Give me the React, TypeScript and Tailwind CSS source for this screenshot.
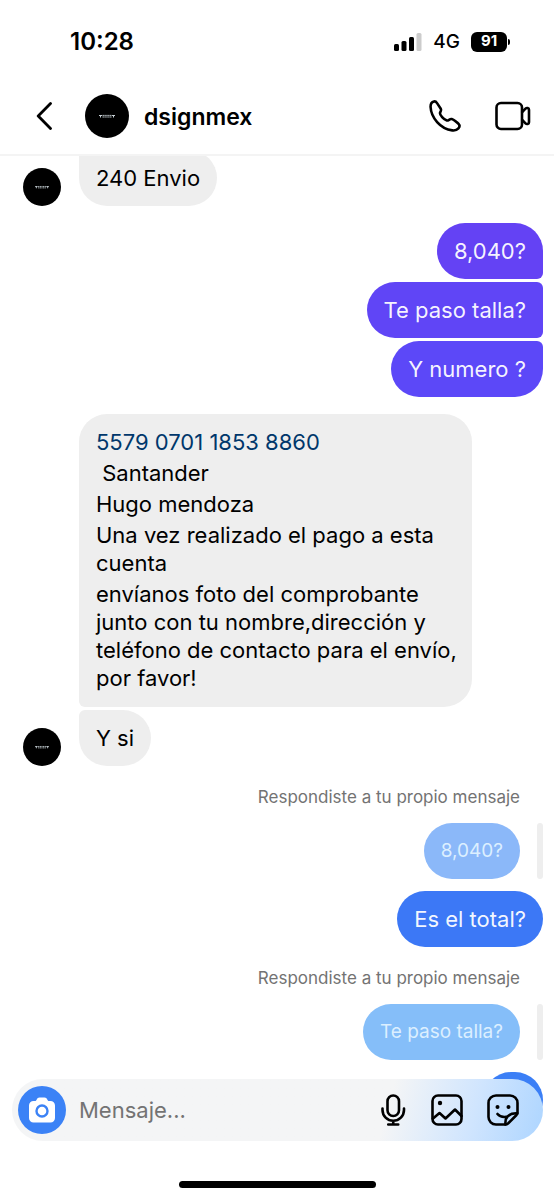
import type { ReactNode } from "react";

type Corner = "top" | "middle" | "bottom";

const sentCorners: Record<Corner, string> = {
  top: "rounded-br-md",
  middle: "rounded-r-md",
  bottom: "rounded-tr-md",
};

function Avatar({ size }: { size: "md" | "lg" }) {
  return (
    <svg viewBox="0 0 44 44" className={size === "lg" ? "size-11 shrink-0" : "size-[38px] shrink-0"} aria-hidden="true">
      <circle cx="22" cy="22" r="22" fill="#000" />
      <g fill="none" stroke="#c4cdd2" strokeWidth="1">
        <path d="M14 21.5h3M15.5 21v2.5M27 21.5h3M28.5 21v2.5" />
        <path d="M17.5 21.4h9M17.5 23h9" strokeDasharray="1.4 .5" />
      </g>
    </svg>
  );
}

function SentBubble({ children, corner, color }: { children: ReactNode; corner?: Corner; color: string }) {
  return (
    <p className={`rounded-[28px] px-[17px] py-[14px] text-[22px] leading-7 text-white/95 ${color} ${corner ? sentCorners[corner] : ""}`}>
      {children}
    </p>
  );
}

function ReplyQuote({ children, color }: { children: ReactNode; color: string }) {
  return (
    <div className="flex flex-col items-end">
      <p className="mr-[23px] text-[17px] leading-5 text-[#737373]">Respondiste a tu propio mensaje</p>
      <div className="mt-4 flex gap-[17px]">
        <p className={`rounded-[28px] px-[17px] py-[14px] text-[19px] leading-7 text-[#dcefff] ${color}`}>{children}</p>
        <span className="w-[6px] rounded-full bg-[#eee]" />
      </div>
    </div>
  );
}

function StatusBar() {
  return (
    <div className="flex h-[77px] items-center justify-between pt-[6px] pr-11 pl-[70px]">
      <time className="text-2xl font-semibold">10:28</time>
      <div className="flex items-center gap-[11px]">
        <svg width="28" height="18" viewBox="0 0 28 18" aria-hidden="true">
          <rect x="0" y="11" width="5" height="7" rx="1.5" />
          <rect x="7.5" y="8" width="5" height="10" rx="1.5" />
          <rect x="15" y="4" width="5" height="14" rx="1.5" />
          <rect x="22.5" y="0" width="5" height="18" rx="1.5" fill="#ccc" />
        </svg>
        <span className="pt-px text-[19px] font-medium">4G</span>
        <span className="flex items-center gap-px">
          <span className="flex h-5 w-9 items-center justify-center rounded-md bg-black text-[15px] font-bold text-white">91</span>
          <span className="h-[6px] w-[2px] rounded-r-full bg-black" />
        </span>
      </div>
    </div>
  );
}

function ChatHeader() {
  return (
    <header className="relative z-10 border-b-2 border-[#f4f4f4] bg-white">
      <StatusBar />
      <div className="flex h-[77px] items-center pr-[23px] pl-9">
        <button type="button" aria-label="Atrás">
          <svg width="18" height="28" viewBox="0 0 18 28" fill="none" stroke="#000" strokeWidth="2.8" strokeLinecap="round" strokeLinejoin="round">
            <path d="M14.5 1.600 2.200 14l12.300 12.400" />
          </svg>
        </button>
        <div className="ml-[31px] flex flex-1 items-center gap-[15px]">
          <Avatar size="lg" />
          <h1 className="pt-[3px] text-[23px] font-semibold">dsignmex</h1>
        </div>
        <div className="flex items-center gap-[34px]">
          <button type="button" aria-label="Llamar">
            <svg width="32" height="32" viewBox="0 0 31 31" fill="none" stroke="#000" strokeWidth="2.5" strokeLinecap="round" strokeLinejoin="round">
              <path d="M1.500 6.500C1.500 3.500 3 1.800 4.800 1.400C6 1.200 7 1.800 7.800 3L11.400 8.500C12.200 10 11.300 11 10.700 12.300C10.100 14.300 14.500 19 17.300 19.900C19 20.200 20 18 22 18.500C23.500 18.900 26.500 21.300 28.300 22.700C30 24.200 29.800 26 28.500 27.500C27 29.300 25 29.700 22.500 29.400C11 28 2 17 1.500 6.500Z" />
            </svg>
          </button>
          <button type="button" aria-label="Videollamada">
            <svg width="36" height="30" viewBox="0 0 36 30" fill="none" stroke="#000" strokeWidth="2.6" strokeLinecap="round" strokeLinejoin="round">
              <rect x="1.500" y="2" width="25.500" height="26" rx="4.500" />
              <path d="M27.200 11 30.500 7.700c1.200-1.200 3.500-.8 3.500 1v12.600c0 1.800-2.300 2.200-3.500 1L27.200 19" />
            </svg>
          </button>
        </div>
      </div>
    </header>
  );
}

function Composer() {
  return (
    <form className="flex h-[62px] items-center rounded-full bg-linear-105 from-[#f4f5f6] from-70% via-[#d0e5fe] via-86% to-[#add5ff] pr-6 pl-[6px]">
      <button type="button" aria-label="Cámara" className="flex size-12 shrink-0 items-center justify-center rounded-full bg-[#3b82f6]">
        <svg width="28" height="26" viewBox="0 0 28 26" aria-hidden="true">
          <path fill="#fff" d="M5.500 4H7c.8 0 1.200-.4 1.600-1.200C9.400 1.200 10 .5 11.500.5h5c1.500 0 2.100.7 2.900 2.300.4.800.8 1.200 1.600 1.200h1.500A4.500 4.500 0 0 1 27 8.500V21a4.500 4.500 0 0 1-4.500 4.500h-17A4.500 4.500 0 0 1 1 21V8.500A4.500 4.500 0 0 1 5.500 4Z" />
          <circle cx="14" cy="14" r="5.500" fill="#fff" stroke="#3b82f6" strokeWidth="2.400" />
        </svg>
      </button>
      <input
        type="text"
        aria-label="Mensaje"
        placeholder="Mensaje..."
        className="ml-[13px] min-w-0 flex-1 bg-transparent text-[22px] outline-none placeholder:text-[#737373]"
      />
      <div className="flex items-center gap-6">
        <button type="button" aria-label="Mensaje de voz">
          <svg width="26" height="32" viewBox="0 0 26 32" fill="none" stroke="#000" strokeWidth="2.600" strokeLinecap="round">
            <rect x="6.500" y="1.500" width="11.500" height="20.500" rx="5.750" />
            <path d="M1.500 14.500v1.500a10.750 10.750 0 0 0 21.500 0v-1.500M12.250 27v3.500M7.250 30.500h10" />
          </svg>
        </button>
        <button type="button" aria-label="Galería">
          <svg width="32" height="32" viewBox="0 0 32 32" fill="none" stroke="#000" strokeWidth="2.600" strokeLinecap="round" strokeLinejoin="round">
            <rect x="1.500" y="1.500" width="29" height="29" rx="5.500" />
            <path d="m2 24.500 6.500-5.500 6 5.500 9.500-9 6.500 6.500" />
            <circle cx="9" cy="9" r="2.200" fill="#000" stroke="none" />
          </svg>
        </button>
        <button type="button" aria-label="Stickers">
          <svg width="32" height="32" viewBox="0 0 32 32" fill="none" stroke="#000" strokeWidth="2.600" strokeLinecap="round" strokeLinejoin="round">
            <path d="M18.500 30.500H9A7.500 7.500 0 0 1 1.500 23V9A7.500 7.500 0 0 1 9 1.500h14A7.500 7.500 0 0 1 30.500 9v9.500c0 1-.4 1.800-1 2.500l-8.500 8.500c-.7.600-1.500 1-2.500 1Z" />
            <path d="M18.500 30.500c-.3-3 .2-6.200 2.200-8.200 2.200-2.200 5.600-3.300 9.600-3M10.500 20c1.800 2.300 4.800 3.400 9 2.800" />
            <circle cx="10.500" cy="13" r="2" fill="#000" stroke="none" />
            <circle cx="21.500" cy="13" r="2" fill="#000" stroke="none" />
          </svg>
        </button>
      </div>
    </form>
  );
}

export default function App() {
  return (
    <div className="flex min-h-screen flex-col overflow-hidden bg-white font-['Inter',sans-serif] text-black">
      <ChatHeader />

      <main className="-mt-[6px] flex flex-1 flex-col gap-[17px] pr-[11px] pl-[23px]">
        <div className="flex items-end gap-[18px]">
          <Avatar size="md" />
          <p className="rounded-[28px] rounded-tl-md bg-[#eee] px-[17px] py-[14px] text-[22px] leading-7">240 Envio</p>
        </div>

        <div className="flex flex-col items-end gap-[3px]">
          <SentBubble corner="top" color="bg-[#6442f4]">8,040?</SentBubble>
          <SentBubble corner="middle" color="bg-[#6045f6]">Te paso talla?</SentBubble>
          <SentBubble corner="bottom" color="bg-[#5c48f8]">Y numero ?</SentBubble>
        </div>

        <div className="flex flex-col gap-[3px]">
          <div className="ml-14 flex w-[393px] flex-col gap-[3px] rounded-[28px] rounded-bl-md bg-[#eee] px-[17px] pt-[14px] pb-[15px] text-[22px] leading-7">
            <p>
              <a href="#" className="text-[#00376b]">5579 0701 1853 8860</a>
            </p>
            <p className="whitespace-pre"> Santander</p>
            <p>Hugo mendoza</p>
            <p>
              Una vez realizado el pago a esta
              <br />
              cuenta
            </p>
            <p className="whitespace-nowrap">
              envíanos foto del comprobante
              <br />
              junto con tu nombre,dirección y
              <br />
              teléfono de contacto para el envío,
              <br />
              por favor!
            </p>
          </div>
          <div className="flex items-end gap-[18px]">
            <Avatar size="md" />
            <p className="rounded-[28px] rounded-tl-md bg-[#eee] px-[17px] py-[14px] text-[22px] leading-7">Y si</p>
          </div>
        </div>

        <div className="mt-1 flex flex-col items-end">
          <ReplyQuote color="bg-[#8bb8f9]">8,040?</ReplyQuote>
          <div className="mt-3">
            <SentBubble color="bg-[#3c78f6]">Es el total?</SentBubble>
          </div>
        </div>

        <div className="mt-1 flex flex-col items-end">
          <ReplyQuote color="bg-[#85bef9]">Te paso talla?</ReplyQuote>
          {/* last message, mostly tucked under the composer */}
          <div className="mt-3 h-14 w-[60px] rounded-[28px] bg-[#3b7ff6]" />
        </div>
      </main>

      <footer className="relative z-10 -mt-[50px] pr-[11px] pb-3 pl-3">
        <Composer />
        <div className="mx-auto mt-10 h-[7px] w-[197px] rounded-full bg-black" />
      </footer>
    </div>
  );
}
